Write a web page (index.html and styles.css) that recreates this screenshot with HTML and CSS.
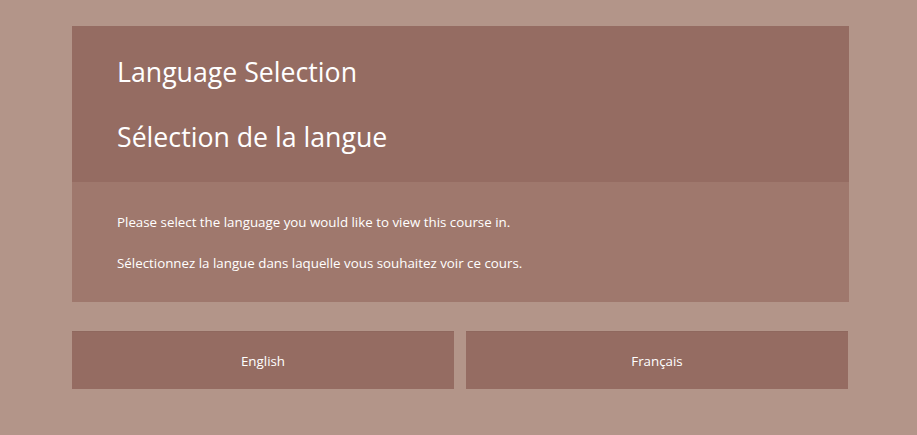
FILE: index.html
```html
<!DOCTYPE html>
<html lang="en">
<head>
<meta charset="utf-8">
<link rel="stylesheet" href="styles.css">
</head>
<body>
<div class="page">
  <div class="card">
    <div class="card-header">
      <h1 class="title">Language Selection</h1>
      <h1 class="title">Sélection de la langue</h1>
    </div>
    <div class="card-body">
      <p class="text">Please select the language you would like to view this course in.</p>
      <p class="text">Sélectionnez la langue dans laquelle vous souhaitez voir ce cours.</p>
    </div>
  </div>
  <div class="buttons">
    <button class="btn">English</button>
    <button class="btn">Français</button>
  </div>
</div>
</body>
</html>
```
FILE: styles.css
```css
html, body {
  margin: 0;
  padding: 0;
  height: 100%;
}
body {
  background: #b39589;
  font-family: "Open Sans", "Noto Sans", sans-serif;
  color: #ffffff;
}
.page {
  width: 777px;
  margin: 0 0 0 72px;
  padding-top: 26px;
}
.card-header {
  background: #956c62;
  height: 156px;
  box-sizing: border-box;
  padding: 1px 45px 0;
  display: flex;
  flex-direction: column;
  justify-content: center;
  gap: 29px;
}
.title {
  margin: 0;
  font-weight: 400;
  font-size: 26.7px;
  line-height: 36px;
}
.card-body {
  background: #9f786d;
  height: 120px;
  box-sizing: border-box;
  padding: 31px 45px 0;
}
.text {
  margin: 0 0 23px;
  font-size: 13.33px;
  line-height: 18px;
}
.buttons {
  display: flex;
  gap: 12px;
  width: 776px;
  margin-top: 29px;
}
.btn {
  flex: 1;
  height: 58px;
  background: #956c62;
  border: none;
  border-top: 1px solid #8f685e;
  color: #ffffff;
  font-family: "Open Sans", "Noto Sans", sans-serif;
  font-size: 13.33px;
  padding: 0;
}
```
